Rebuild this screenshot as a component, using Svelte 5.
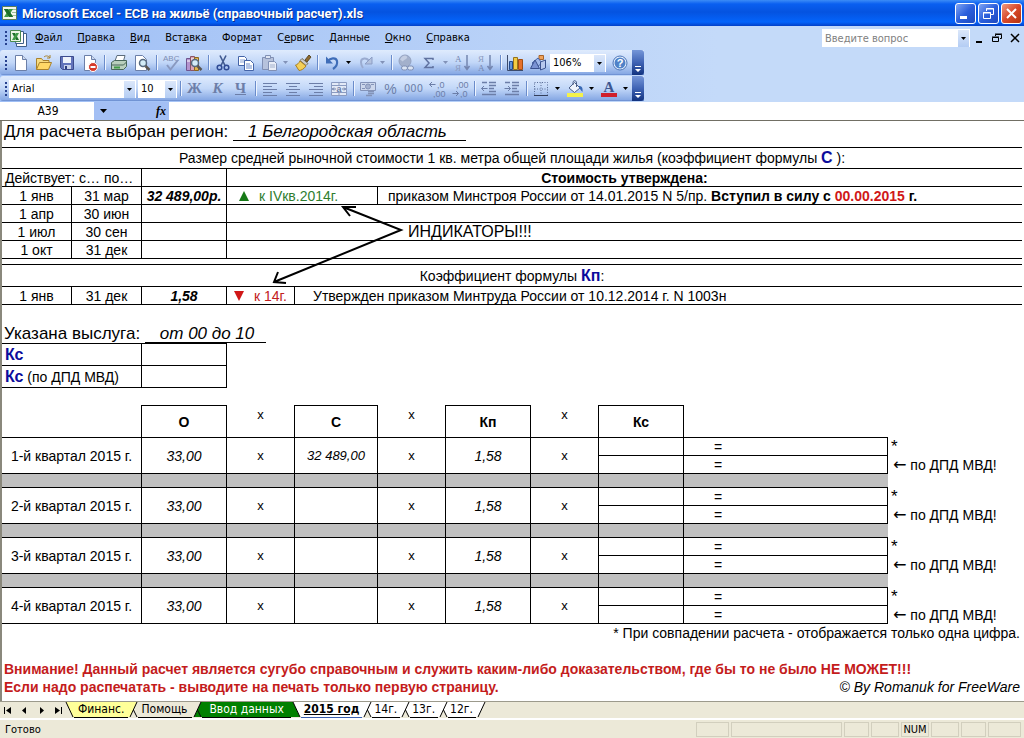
<script>
    const menus = [
        { before: '', key: 'Ф', after: 'айл' },
        { before: '', key: 'П', after: 'равка' },
        { before: '', key: 'В', after: 'ид' },
        { before: 'Вст', key: 'а', after: 'вка' },
        { before: 'Фор', key: 'м', after: 'ат' },
        { before: 'С', key: 'е', after: 'рвис' },
        { before: '', key: 'Д', after: 'анные' },
        { before: '', key: 'О', after: 'кно' },
        { before: '', key: 'С', after: 'правка' }
    ];

    const excelIcon = '<path d="M1.500 2.500h14v13h-14z" fill="#f4f8ee" stroke="#5c7f5a"/><path d="M11 5.500h4M11 8.500h4M11 11.500h4" stroke="#9dbf9a"/><path d="M3 5h4l5 8H8z" fill="#1f7a2c"/><path d="M12 5H8l-5 8h4z" fill="#3f9a45"/><path d="M3 5h4l5 8H8z" fill="#1d6f2a"/>';
    const bookIcon = '<path d="M11.500 4.500h6v13h-10v-3" fill="#fff" stroke="#3f5f8a"/><path d="M8.500 2.500h6v12h-8z" fill="#fff" stroke="#3f5f8a"/><path d="M1.500 1.500h10v11h-10z" fill="#eaf5e4" stroke="#4b8a50"/><path d="M3 4h3l4 7H7z" fill="#1d6f2a"/><path d="M10 4H7l-4 7h3z" fill="#3f9a45"/>';
    const sheetPaper = '<path d="M3.500 1.500h7l4 4v11h-11z" fill="#fff" stroke="#6b7fa8"/><path d="M10.500 1.500v4h4" fill="#cdd9ee" stroke="#6b7fa8"/>';
    const lens = '<circle cx="10" cy="9" r="3.500" fill="#d3ecf7" stroke="#55697f" stroke-width="1.500"/><path d="M12.500 12l4 4" stroke="#5b5650" stroke-width="2.500"/>';

    // Inner markup of the 18x18 toolbar icons
    const icons = {
        new: sheetPaper,
        open: '<path d="M1.500 15.500v-11h5l1.500 2h6v3" fill="#f7dc82" stroke="#a8812c"/><path d="M1.500 15.500l3-7h12l-3 7z" fill="#ffd867" stroke="#a8812c"/><path d="M9 3c2-2 5-1 6 1m0-3v3h-3" fill="none" stroke="#a8812c"/>',
        save: '<path d="M2.500 2.500h13v13h-11l-2-2z" fill="#6273ba" stroke="#3c4a8c"/><path d="M5 3h8v6H5z" fill="#eef2fb"/><path d="M6 11h7v4H6z" fill="#c9d2ea"/><path d="M7 12h2v3H7z" fill="#2c3c80"/>',
        permission: sheetPaper + '<circle cx="12" cy="13" r="4.500" fill="#d5392b" stroke="#fff"/><path d="M9.500 13h5" stroke="#fff" stroke-width="2"/>',
        print: '<path d="M5 7l2-5.500h8L13.500 7z" fill="#fff" stroke="#5c6c7c"/><path d="M1.500 8.500l3-2h12v6l-3 3h-12z" fill="#b9cfbd" stroke="#48665a"/><path d="M2 11h11.500l3-3" fill="none" stroke="#48665a"/><path d="M4 13.500h6" stroke="#3f9a45" stroke-width="2"/>',
        preview: '<path d="M2.500 1.500h7l4 4v11h-11z" fill="#fff" stroke="#6b7fa8"/>' + lens,
        spelling: '<text x="1" y="7" font-size="8" font-family="Liberation Sans" fill="#7f8fb4">ABC</text><path d="M5 11l3.500 4.500L16 6" fill="none" stroke="#8999c0" stroke-width="2"/>',
        research: '<path d="M1.500 4.500h4v12h-4z" fill="#b494cf" stroke="#6f5590"/><path d="M5.500 2.500h4v14h-4z" fill="#d9a5b8" stroke="#8a5565"/><path d="M9.500 3.500h4v13h-4z" fill="#e1b54b" stroke="#8a6521"/><path d="M2 7h3M6 5h3M10 6h3" stroke="#fff"/>' + lens,
        cut: '<path d="M6 1.500l5 10M12 1.500l-5 10" stroke="#40598f" stroke-width="1.600"/><circle cx="5.500" cy="13.500" r="2.300" fill="none" stroke="#2e4a94" stroke-width="1.500"/><circle cx="12.500" cy="13.500" r="2.300" fill="none" stroke="#2e4a94" stroke-width="1.500"/>',
        copy: '<path d="M1.500 2.500h6l2 2v7h-8z" fill="#fff" stroke="#4464a8"/><path d="M3 6h5M3 8h5" stroke="#8ba3d3"/><path d="M7.500 6.500h6l3 3v7h-9z" fill="#fff" stroke="#4464a8"/><path d="M9 10h4M9 12h6M9 14h6" stroke="#6d8ccb"/>',
        paste: '<path d="M2.500 3.500h11v12h-11z" fill="#b6c2dc" stroke="#8190b4"/><path d="M5.500 1.500h5v3h-5z" fill="#dde5f3" stroke="#8190b4"/><path d="M8.500 7.500h6l2 2v7h-8z" fill="#e9eef8" stroke="#8190b4"/><path d="M10 11h5M10 13h5" stroke="#a2b0cc"/>',
        brush: '<path d="M11 6l4-5 2 2-4 5z" fill="#8e6a2f" stroke="#5d4a24"/><path d="M8 4.500l6 5-2 2-6-5z" fill="#ccc" stroke="#77705c"/><path d="M6 7l6 5c-2 3-5 4.500-7 4.500L1.500 11C3 11 5 9 6 7z" fill="#f4cf57" stroke="#a97f22"/>',
        undo: '<path d="M5 7c2-3 8-4 9 0 .6 3-1 6-4 8" fill="none" stroke="#3f6db8" stroke-width="2.200"/><path d="M3 2.500v7h7z" fill="#3f6db8"/>',
        redo: '<path d="M12 7C10 3.500 4 3.500 4 8c0 2 .5 4 2 6" fill="none" stroke="#9aabd0" stroke-width="2"/><path d="M15 3v7H8z" fill="#b4c2de" stroke="#8c9dc4"/>',
        link: '<circle cx="8" cy="7" r="6" fill="#a3b0cb" stroke="#94a2c1"/><path d="M4 6c1-3 4-4 5-3s-3 2-4 4" fill="none" stroke="#c3cde2" stroke-width="2"/><rect x="4.500" y="12" width="6" height="4" rx="2" fill="#dbe4f3" stroke="#7f8fb4"/><rect x="10.500" y="12" width="6" height="4" rx="2" fill="#dbe4f3" stroke="#7f8fb4"/>',
        sum: '<path d="M13 6V4.500H5L9 9l-4 4.500h8V12" fill="none" stroke="#6072a0" stroke-width="1.500"/>',
        sortUp: '<text x="1" y="8" font-size="9" font-family="Liberation Serif" fill="#7486b0">А</text><text x="1" y="17" font-size="9" font-family="Liberation Serif" fill="#8c9cc0">Я</text><path d="M13 1v14M10.500 12l2.500 3.500 2.500-3.500" fill="none" stroke="#7486b0" stroke-width="1.500"/>',
        sortDown: '<text x="1" y="8" font-size="9" font-family="Liberation Serif" fill="#8c9cc0">Я</text><text x="1" y="17" font-size="9" font-family="Liberation Serif" fill="#7486b0">А</text><path d="M13 1v14M10.500 12l2.500 3.500 2.500-3.500" fill="none" stroke="#7486b0" stroke-width="1.500"/>',
        chart: '<path d="M1.500 1v15.500H17" fill="none" stroke="#3c4b6b"/><path d="M3.500 7.500h3v8h-3z" fill="#5f92d8" stroke="#244b8d"/><path d="M7.500 3.500h4v12h-4z" fill="#f3cb43" stroke="#95731c"/><path d="M12.500 5.500h4v10h-4z" fill="#e5702a" stroke="#a24d11"/>',
        drawing: '<path d="M10 1.500h4.500v4H10z" fill="#f0a35b" stroke="#a7642a"/><path d="M3 9l6-5 4 5-5 4z" fill="#9fb8ea" stroke="#4863a4"/><path d="M1.500 14.500L6 6l4.500 8.500z" fill="#7a93d4" stroke="#39518f"/><path d="M11.500 8l5-2v8l-5 2z" fill="#b7c8ee" stroke="#39518f"/>',
        help: '<circle cx="9" cy="9" r="7" fill="#e8f1fd" stroke="#4a74b8"/><circle cx="9" cy="9" r="5.500" fill="#4f82c8"/><text x="9" y="13" text-anchor="middle" font-size="11" font-weight="bold" font-family="Liberation Sans" fill="#fff">?</text>',
        alignLeft: '<path d="M2 3.500h14M2 6.500h9M2 9.500h14M2 12.500h9M2 15.500h14" stroke="#6c7ea8"/>',
        alignCenter: '<path d="M2 3.500h14M5 6.500h8M2 9.500h14M5 12.500h8M2 15.500h14" stroke="#6c7ea8"/>',
        alignRight: '<path d="M2 3.500h14M7 6.500h9M2 9.500h14M7 12.500h9M2 15.500h14" stroke="#6c7ea8"/>',
        merge: '<path d="M1.500 2.500h15v13h-15zM1.500 5.500h15M1.500 12.500h15M9 2.500v3M9 12.500v3" fill="#e3eaf7" stroke="#8a9bc1"/><path d="M2 9h4M12 9h4M4 7.500L2.500 9 4 10.500M14 7.500L15.500 9 14 10.500" fill="none" stroke="#6c7ea8"/><text x="9" y="12" text-anchor="middle" font-size="9" font-weight="bold" font-family="Liberation Sans" fill="#6c7ea8">a</text>',
        currency: '<path d="M1.500 2.500h15v8h-15z" fill="#ccd7ec" stroke="#8393b8"/><circle cx="9" cy="6.500" r="2.500" fill="#a4b2d0" stroke="#8393b8"/><path d="M3 4.500h3M12 4.500h3M3 8.500h3" stroke="#8393b8"/><path d="M9 11.500h6M9 13.500h6M7 15.500h6" stroke="#8393b8" stroke-width="1.500"/>',
        moreDigits: '<text x="9" y="8" font-size="9" font-family="Liberation Sans" fill="#6c7ea8">,0</text><text x="5" y="17" font-size="9" font-family="Liberation Sans" fill="#6c7ea8">,00</text><path d="M7.500 4.500h-6M4 2L1.500 4.500 4 7" fill="none" stroke="#6c7ea8"/>',
        fewerDigits: '<text x="5" y="8" font-size="9" font-family="Liberation Sans" fill="#6c7ea8">,00</text><text x="9" y="17" font-size="9" font-family="Liberation Sans" fill="#6c7ea8">,0</text><path d="M1.500 13.500h6M5 11l2.500 2.500L5 16" fill="none" stroke="#6c7ea8"/>',
        outdent: '<path d="M2 2.500h5M9 2.500h7M9 5.500h7M9 8.500h5M9 11.500h7M2 14.500h14" stroke="#6c7ea8" stroke-width="1.300"/><path d="M7.500 8.500h-6M4 6L1.500 8.500 4 11" fill="none" stroke="#6c7ea8"/>',
        indent: '<path d="M2 2.500h5M9 2.500h7M9 5.500h7M9 8.500h5M9 11.500h7M2 14.500h14" stroke="#6c7ea8" stroke-width="1.300"/><path d="M1.500 8.500h6M5 6l2.500 2.500L5 11" fill="none" stroke="#6c7ea8"/>',
        borders: '<path d="M2.500 2.500h13v13h-13zM9 2.500v13M2.500 9h13" fill="none" stroke="#5a6d96" stroke-dasharray="1 1.500"/><path d="M2 15.500h14" stroke="#333f5c"/>',
        fill: '<path d="M3 8l5.500-5.500L14 8l-5.500 4.500z" fill="#eef3fb" stroke="#4c5f87"/><path d="M7 5V2.500C7 0 10.500 0 10.500 3v4" fill="none" stroke="#4c5f87"/><path d="M13 6c3 0 4 2 3.500 6-1.500-1-2-3-3.500-4z" fill="#3868b4"/><path d="M1 13h16v4H1z" fill="#f4f14a"/>',
        fontColor: '<text x="9" y="12" text-anchor="middle" font-size="15" font-weight="bold" font-family="Liberation Serif" fill="#3e5791">A</text><path d="M1 13h16v4H1z" fill="#d01f2c"/>'
    };

    const standardBar = [
        { icon: 'new', label: 'Создать' },
        { icon: 'open', label: 'Открыть' },
        { icon: 'save', label: 'Сохранить' },
        { icon: 'permission', label: 'Разрешения' },
        { sep: true },
        { icon: 'print', label: 'Печать' },
        { icon: 'preview', label: 'Предварительный просмотр' },
        { sep: true },
        { icon: 'spelling', label: 'Орфография' },
        { icon: 'research', label: 'Справочные материалы' },
        { sep: true },
        { icon: 'cut', label: 'Вырезать' },
        { icon: 'copy', label: 'Копировать' },
        { icon: 'paste', label: 'Вставить', more: 'off' },
        { icon: 'brush', label: 'Формат по образцу' },
        { sep: true },
        { icon: 'undo', label: 'Отменить', more: 'on' },
        { icon: 'redo', label: 'Вернуть', more: 'off' },
        { sep: true },
        { icon: 'link', label: 'Гиперссылка' },
        { icon: 'sum', label: 'Автосумма', more: 'off' },
        { icon: 'sortUp', label: 'Сортировка по возрастанию' },
        { icon: 'sortDown', label: 'Сортировка по убыванию' },
        { sep: true },
        { icon: 'chart', label: 'Мастер диаграмм' },
        { icon: 'drawing', label: 'Рисование' }
    ];

    const formatBar = [
        { sep: true },
        { text: 'Ж', style: 'bold', label: 'Полужирный' },
        { text: 'К', style: 'bold italic', label: 'Курсив' },
        { text: 'Ч', style: 'bold underline', label: 'Подчеркнутый' },
        { sep: true },
        { icon: 'alignLeft', label: 'По левому краю' },
        { icon: 'alignCenter', label: 'По центру' },
        { icon: 'alignRight', label: 'По правому краю' },
        { icon: 'merge', label: 'Объединить и поместить в центре' },
        { sep: true },
        { icon: 'currency', label: 'Денежный формат' },
        { text: '%', style: 'percent', label: 'Процентный формат' },
        { text: '000', style: 'plain', label: 'Формат с разделителями' },
        { icon: 'moreDigits', label: 'Увеличить разрядность' },
        { icon: 'fewerDigits', label: 'Уменьшить разрядность' },
        { sep: true },
        { icon: 'outdent', label: 'Уменьшить отступ' },
        { icon: 'indent', label: 'Увеличить отступ' },
        { sep: true },
        { icon: 'borders', label: 'Границы', more: 'on' },
        { icon: 'fill', label: 'Цвет заливки', more: 'on' },
        { icon: 'fontColor', label: 'Цвет шрифта', more: 'on' }
    ];

    const emptyPeriods = [
        { from: '1 апр', to: '30 июн', note: '' },
        { from: '1 июл', to: '30 сен', note: 'ИНДИКАТОРЫ!!!' },
        { from: '1 окт', to: '31 дек', note: '' }
    ];

    const quarters = [
        { name: '1-й квартал 2015 г.', area: '33,00', price: '32 489,00', kp: '1,58' },
        { name: '2-й квартал 2015 г.', area: '33,00', price: '', kp: '1,58' },
        { name: '3-й квартал 2015 г.', area: '33,00', price: '', kp: '1,58' },
        { name: '4-й квартал 2015 г.', area: '33,00', price: '', kp: '1,58' }
    ];

    const grey = '#ece9d8';
    const tabs = [
        { name: 'Финанс.', color: '#ffff99', kind: 'yellow' },
        { name: 'Помощь', color: grey, kind: 'grey' },
        { name: 'Ввод данных', color: '#008000', kind: 'green' },
        { name: '2015 год', color: '#ffffff', kind: 'active' },
        { name: '14г.', color: '#ffffff', kind: 'white' },
        { name: '13г.', color: '#ffffff', kind: 'white' },
        { name: '12г.', color: '#ffffff', kind: 'white' }
    ];

    const navArrows = [
        { label: 'Первый лист', d: 'M2 2h1v7H2zM9 2v7L4 5.500z' },
        { label: 'Предыдущий лист', d: 'M7 2v7L3 5.500z' },
        { label: 'Следующий лист', d: 'M4 2v7l4-3.500z' },
        { label: 'Последний лист', d: 'M2 2v7l5-3.500zM8 2h1v7H8z' }
    ];
</script>

{#snippet tools(items)}
    {#each items as item}
        {#if item.sep}
            <span class="sep"></span>
        {:else}
            <button class="tool" aria-label={item.label}>
                {#if item.icon}
                    <svg width="18" height="18" viewBox="0 0 18 18">{@html icons[item.icon]}</svg>
                {:else}
                    <span class="glyph {item.style}">{item.text}</span>
                {/if}
            </button>
            {#if item.more}
                <button class="more {item.more}" aria-label="{item.label}: другие варианты">
                    <svg width="5" height="3"><path d="M0 0h5L2.500 3z" fill="currentColor" /></svg>
                </button>
            {/if}
        {/if}
    {/each}
{/snippet}

{#snippet combo(label, value, kind)}
    <span class="combo {kind}">
        <select aria-label={label}>
            <option>{value}</option>
        </select>
        <svg class="drop" width="11" height="17"><path d="M3 7h5L5.500 10z" /></svg>
    </span>
{/snippet}

{#snippet cap()}
    <button class="cap" aria-label="Параметры панелей инструментов">
        <svg width="8" height="8"><path d="M1 1h6v1H1zM1 4h6L4 7z" fill="#fff" /></svg>
    </button>
{/snippet}

<main>
    <header class="titlebar">
        <svg width="18" height="18" viewBox="0 0 18 18">{@html excelIcon}</svg>
        <h1>Microsoft Excel - ЕСВ на жильё (справочный расчет).xls</h1>
        <div class="window-buttons">
            <button aria-label="Свернуть"><svg width="17" height="17"><path d="M3 11h7v3H3z" fill="#fff" /></svg></button>
            <button aria-label="Восстановить">
                <svg width="17" height="17" fill="none" stroke="#fff"><path d="M6.500 6V3.500h7v6H11M6 4h8M3.500 7.500h7v6h-7zM3 8h8" /></svg>
            </button>
            <button class="close" aria-label="Закрыть">
                <svg width="17" height="17"><path d="M4 4l9 9M13 4l-9 9" stroke="#fff" stroke-width="2" /></svg>
            </button>
        </div>
    </header>

    <nav class="menubar">
        <span class="grip"></span>
        <svg width="19" height="19" viewBox="0 0 19 19">{@html bookIcon}</svg>
        <div class="menus">
            {#each menus as menu}
                <button>{menu.before}<u>{menu.key}</u>{menu.after}</button>
            {/each}
        </div>
        <span class="ask">
            <input type="text" placeholder="Введите вопрос" aria-label="Введите вопрос" />
            <svg class="drop" width="11" height="17"><path d="M3 7h5L5.500 10z" /></svg>
        </span>
        <div class="book-buttons">
            <button aria-label="Свернуть книгу"><svg width="12" height="12"><path d="M3 9h6v2H3z" /></svg></button>
            <button aria-label="Восстановить книгу">
                <svg width="12" height="12" fill="none" stroke="#000"><path d="M4.500 4V2.500h6v4H9M4 2h7M1.500 5.500h6v4h-6zM1 5h7" /></svg>
            </button>
            <button aria-label="Закрыть книгу"><svg width="12" height="12"><path d="M2 2l8 8M10 2l-8 8" stroke="#000" stroke-width="1.500" /></svg></button>
        </div>
    </nav>

    <div class="toolbars">
        <div class="toolbar">
            <span class="grip"></span>
            {@render tools(standardBar)}
            {@render combo('Масштаб', '106%', 'zoom')}
            {@render tools([{ icon: 'help', label: 'Справка' }])}
            {@render cap()}
        </div>
        <div class="toolbar">
            <span class="grip"></span>
            {@render combo('Шрифт', 'Arial', 'font')}
            {@render combo('Размер', '10', 'size')}
            {@render tools(formatBar)}
            {@render cap()}
        </div>
    </div>

    <div class="formula-bar">
        <input class="name-box" type="text" value="A39" aria-label="Имя" />
        <div class="fx">
            <button aria-label="Список имен"><svg width="7" height="4"><path d="M0 0h7L3.500 4z" /></svg></button>
            <button class="insert" aria-label="Вставка функции">fx</button>
        </div>
        <input class="formula" type="text" aria-label="Строка формул" />
    </div>

    <section class="sheet">
        <p class="region">Для расчета выбран регион: <em>1 Белгородская область</em></p>

        <table class="rates">
            <colgroup>
                <col class="day" /><col class="day" /><col class="val" /><col class="op" /><col class="price" /><col />
            </colgroup>
            <tbody>
                <tr class="head">
                    <td colspan="6">Размер средней рыночной стоимости 1 кв. метра общей площади жилья (коэффициент формулы <b class="blue">С</b> ):</td>
                </tr>
                <tr>
                    <td class="line left" colspan="2">Действует: с… по…</td>
                    <td class="line"></td>
                    <td colspan="3"><b>Стоимость утверждена:</b></td>
                </tr>
                <tr>
                    <td class="line">1 янв</td>
                    <td class="line">31 мар</td>
                    <td class="line sum">32 489,00р.</td>
                    <td class="line mark up" colspan="2"><svg width="10" height="10"><path d="M5 0l5 10H0z" fill="#177a17" /></svg>к IVкв.2014г.</td>
                    <td class="order">приказом Минстроя России от 14.01.2015 N 5/пр. <b>Вступил в силу с <span class="red">00.00.2015</span> г.</b></td>
                </tr>
                {#each emptyPeriods as period}
                    <tr>
                        <td class="line">{period.from}</td>
                        <td class="line">{period.to}</td>
                        <td class="line"></td>
                        <td colspan="2"></td>
                        <td class="note">{period.note}</td>
                    </tr>
                {/each}
                <tr class="gap"><td colspan="6"></td></tr>
                <tr class="kp">
                    <td colspan="6">Коэффициент формулы <b class="blue">Кп</b>:</td>
                </tr>
                <tr>
                    <td class="line">1 янв</td>
                    <td class="line">31 дек</td>
                    <td class="line sum">1,58</td>
                    <td class="line mark down"><svg width="10" height="10"><path d="M0 0h10L5 10z" fill="#d01818" /></svg>к 14г.</td>
                    <td class="order wide" colspan="2">Утвержден приказом Минтруда России от 10.12.2014 г. N 1003н</td>
                </tr>
            </tbody>
        </table>

        <svg class="arrows" width="136" height="86" fill="none" stroke="#000" stroke-width="2">
            <path d="M73 6l58 23L4 81M86 6L73 6l7 9M8 71L4 81l12 1" />
        </svg>

        <p class="service">Указана выслуга: <em>от 00 до 10</em></p>

        <table class="length">
            <tbody>
                <tr><th><b class="blue">Кс</b></th><td></td></tr>
                <tr><th><b class="blue">Кс</b> (по ДПД МВД)</th><td></td></tr>
            </tbody>
        </table>

        <table class="quarters">
            <colgroup>
                <col class="name" /><col class="val" /><col class="op" /><col class="price" /><col class="op" />
                <col class="val" /><col class="op" /><col class="val" /><col class="result" /><col />
            </colgroup>
            <thead>
                <tr>
                    <td class="line"></td>
                    <th>О</th>
                    <td class="line times">х</td>
                    <th>С</th>
                    <td class="line times">х</td>
                    <th>Кп</th>
                    <td class="line times">х</td>
                    <th>Кс</th>
                    <td></td>
                    <td class="side"></td>
                </tr>
            </thead>
            <tbody>
                {#each quarters as quarter, i}
                    {#if i > 0}
                        <tr class="band">
                            <td class="line"></td><td class="line"></td><td class="line"></td>
                            <td class="line"></td><td class="line"></td><td class="line"></td>
                            <td class="line"></td><td class="line"></td><td></td><td class="side"></td>
                        </tr>
                    {/if}
                    <tr>
                        <td class="line" rowspan="2">{quarter.name}</td>
                        <td class="line num" rowspan="2">{quarter.area}</td>
                        <td class="line small" rowspan="2">х</td>
                        <td class="line num small" rowspan="2">{quarter.price}</td>
                        <td class="line small" rowspan="2">х</td>
                        <td class="line num" rowspan="2">{quarter.kp}</td>
                        <td class="line small" rowspan="2">х</td>
                        <td class="line"></td>
                        <td class="line equals">=</td>
                        <td class="side star">*</td>
                    </tr>
                    <tr>
                        <td class="line"></td>
                        <td class="line equals">=</td>
                        <td class="side"><span class="back">←</span> по ДПД МВД!</td>
                    </tr>
                {/each}
            </tbody>
        </table>

        <p class="footnote">* При совпадении расчета - отображается только одна цифра.</p>

        <div class="warning">
            <p>Внимание! Данный расчет является сугубо справочным и служить каким-либо доказательством, где бы то не было НЕ МОЖЕТ!!!</p>
            <div>
                <p>Если надо распечатать - выводите на печать только первую страницу.</p>
                <i>© By Romanuk for FreeWare</i>
            </div>
        </div>
    </section>

    <nav class="tabs">
        <div class="arrows-nav">
            {#each navArrows as arrow}
                <button aria-label={arrow.label}><svg width="11" height="11"><path d={arrow.d} /></svg></button>
            {/each}
        </div>
        {#each tabs as tab, i}
            {@const prev = i ? tabs[i - 1].color : grey}
            <svg class="edge" width="10" height="16">
                {#if i === 0 || tab.kind === 'active'}
                    <path d="M0 0h2l7 15H0z" fill={prev} />
                    <path d="M2 0h8v15H9z" fill={tab.color} />
                    <path d="M2 0l7 15" stroke="#000" />
                {:else}
                    <path d="M0 0h9L2 15H0z" fill={prev} />
                    <path d="M9 0h1v15H9L5.500 8z" fill={tab.color} />
                    <path d="M5.500 8L2 15h7z" fill={tab.kind === 'green' ? tab.color : grey} />
                    <path d="M9 0L2 15M5.500 8L9 15" stroke="#000" />
                {/if}
            </svg>
            <button class="tab {tab.kind}">{tab.name}</button>
        {/each}
        <svg class="edge" width="10" height="16">
            <path d="M0 0h9L2 15H0z" fill="#fff" />
            <path d="M9 0L2 15" stroke="#000" />
        </svg>
    </nav>

    <footer class="status">
        <span class="ready">Готово</span>
        <span class="pane w33"></span>
        <span class="pane w111"></span>
        <span class="pane w25"></span>
        <span class="pane w28"></span>
        <span class="pane w28">NUM</span>
        <span class="pane w28"></span>
        <span class="pane w25"></span>
        <span class="pane w33"></span>
    </footer>
</main>

<style>
    :global(body) {
        background: #fff;
    }

    main {
        display: flex;
        flex-direction: column;
        min-height: 100vh;
        font-family: "DejaVu Sans Condensed", "DejaVu Sans", sans-serif;
        font-size: 11px;
        color: #000;
    }

    button, input, select {
        margin: 0;
        padding: 0;
        border: 0;
        background: none;
        font: inherit;
        color: inherit;
    }

    svg {
        display: block;
        flex: none;
    }

    p, h1 {
        margin: 0;
    }

    /* Title bar */
    .titlebar {
        display: flex;
        align-items: center;
        gap: 3px;
        height: 26px;
        padding: 0 2px 0 1px;
        background: linear-gradient(#3c8cf6 0, #0a5ff0 4px, #0553e0 12px, #0464fb 22px, #0340c8 26px);
    }

    h1 {
        flex: 1;
        font: bold 13px Roboto, "Open Sans", sans-serif;
        color: #fff;
        text-shadow: 1px 1px #0a2f8c;
    }

    .window-buttons {
        display: flex;
        gap: 2px;
    }

    .window-buttons button {
        display: grid;
        place-items: center;
        width: 21px;
        height: 21px;
        border: 1px solid #fff;
        border-radius: 3px;
        background: linear-gradient(135deg, #7fa5f4, #2b5fdc 50%, #1d49bf);
    }

    .window-buttons .close {
        background: linear-gradient(135deg, #ee9a80, #d8492a 50%, #b4320f);
    }

    /* Menu bar */
    .menubar {
        display: flex;
        align-items: center;
        height: 24px;
        padding: 0 3px 0 5px;
        background: linear-gradient(90deg, #9ebef5, #c4daf9 70%);
    }

    .grip {
        width: 2px;
        height: 14px;
        margin-right: 2px;
        background: repeating-linear-gradient(#27418f 0 2px, transparent 2px 4px);
    }

    .menus {
        display: flex;
        flex: 1;
    }

    .menus button {
        padding: 0 8px 0 7px;
        line-height: 20px;
    }

    .ask {
        position: relative;
        width: 148px;
        height: 18px;
        background: #fff;
    }

    .ask input {
        width: 134px;
        height: 18px;
        padding: 0 3px;
        box-sizing: border-box;
    }

    .ask input::placeholder {
        color: #808080;
        opacity: 1;
    }

    .drop {
        position: absolute;
        top: 1px;
        right: 1px;
        bottom: 0;
        background: linear-gradient(#dbe7fa, #b4cdf4);
        pointer-events: none;
    }

    .book-buttons {
        display: flex;
        gap: 6px;
        margin-left: 3px;
    }

    /* Toolbars */
    .toolbars {
        display: flex;
        flex-direction: column;
        align-items: flex-start;
        gap: 1px;
        padding-bottom: 1px;
        background: linear-gradient(90deg, #9ebef5, #c4daf9 70%);
    }

    .toolbar {
        display: flex;
        align-items: center;
        height: 25px;
        padding-left: 5px;
        border-radius: 3px 0 0 3px;
        background: linear-gradient(#dfebfd, #c2d7f8 50%, #86a8e4 96%, #5c7fc4);
    }

    .tool {
        display: grid;
        place-items: center;
        flex: none;
        width: 23px;
        height: 23px;
    }

    .glyph {
        font: 12px "Liberation Sans", sans-serif;
        color: #6c7ea8;
    }

    .glyph.bold {
        font: bold 15px "Liberation Serif", serif;
    }

    .glyph.italic {
        font-style: italic;
    }

    .glyph.underline {
        text-decoration: underline;
    }

    .glyph.plain {
        font: 11px "DejaVu Sans Condensed", sans-serif;
    }

    .glyph.percent {
        font-size: 14px;
    }

    .more {
        display: grid;
        place-items: center;
        width: 11px;
        height: 23px;
    }

    .more.off {
        color: #8292b8;
    }

    .sep {
        width: 1px;
        height: 15px;
        margin: 0 1px 0 3px;
        border-right: 1px solid #eef4fe;
        background: #6a8ccb;
    }

    .combo {
        position: relative;
        height: 18px;
        background: #fff;
    }

    .combo select {
        width: 100%;
        height: 18px;
        padding: 0 3px;
        appearance: none;
    }

    .combo.font {
        width: 127px;
        margin-right: 2px;
    }

    .combo.size {
        width: 39px;
    }

    .combo.zoom {
        width: 56px;
        margin: 0 2px 0 1px;
    }

    .cap {
        display: flex;
        align-items: flex-end;
        justify-content: center;
        width: 12px;
        height: 25px;
        padding-bottom: 2px;
        margin-left: 1px;
        border-radius: 0 3px 3px 0;
        background: linear-gradient(#7596d8, #3f63b4 50%, #12337f);
    }

    /* Formula bar */
    .formula-bar {
        display: flex;
        height: 18px;
        padding: 0 2px;
        border-bottom: 1px solid #716f64;
        background: #fff;
    }

    .name-box {
        width: 92px;
        font-size: 12px;
        text-align: center;
    }

    .fx {
        display: flex;
        align-items: center;
        justify-content: space-between;
        width: 75px;
        padding: 0 3px 0 6px;
        box-sizing: border-box;
        background: #a3bff4;
    }

    .insert {
        font: italic bold 12px "Liberation Serif", serif;
    }

    .formula {
        flex: 1;
        background: #fff;
    }

    /* Sheet */
    .sheet {
        position: relative;
        flex: 1;
        padding-right: 2px;
        border-left: 2px solid #8a887c;
        background: #fff;
        font-family: "Liberation Sans", Arial, sans-serif;
        font-size: 14px;
        line-height: 16px;
    }

    .region, .service {
        padding-left: 2px;
        font-size: 17px;
        line-height: 18px;
    }

    .region {
        height: 26px;
        padding-top: 2px;
        box-sizing: border-box;
    }

    .region em, .service em {
        display: inline-block;
        border-bottom: 1px solid #000;
        padding: 0 19px 0 15px;
        line-height: 17px;
    }

    .service em {
        padding-right: 12px;
    }

    table {
        border-spacing: 0;
        table-layout: fixed;
        width: 100%;
    }

    td, th {
        padding: 0;
        border-bottom: 1px solid #000;
        text-align: center;
        white-space: nowrap;
        font-weight: normal;
    }

    tr {
        height: 18px;
    }

    .line {
        border-right: 1px solid #000;
    }

    .day {
        width: 70px;
    }

    .val {
        width: 85px;
    }

    .op {
        width: 68px;
    }

    .price {
        width: 83px;
    }

    .name {
        width: 140px;
    }

    .result {
        width: 204px;
    }

    .rates {
        border-top: 1px solid #000;
    }

    .rates .head {
        height: 21px;
    }

    .rates .gap {
        height: 6px;
    }

    .rates .gap td {
        line-height: 5px;
    }

    .rates .kp {
        height: 22px;
    }

    .rates .left {
        padding-left: 3px;
        text-align: left;
    }

    .sum {
        font-weight: bold;
        font-style: italic;
    }

    .mark {
        padding-left: 12px;
        text-align: left;
    }

    .mark svg {
        display: inline-block;
        margin-right: 10px;
    }

    .up {
        color: #2f7d2f;
    }

    .down {
        padding-left: 7px;
        color: #c22020;
    }

    .order {
        padding-left: 10px;
        text-align: left;
    }

    .order.wide {
        padding-left: 18px;
    }

    .note {
        padding-left: 30px;
        text-align: left;
        font-size: 16px;
    }

    .blue {
        font-size: 16px;
        color: #0c0c9c;
    }

    .red {
        color: #d01818;
    }

    .arrows {
        position: absolute;
        top: 80px;
        left: 268px;
    }

    .service {
        padding-top: 20px;
    }

    .length {
        width: 225px;
        border-top: 1px solid #000;
    }

    .length tr {
        height: 22px;
    }

    .length th {
        width: 136px;
        padding-left: 3px;
        border-right: 1px solid #000;
        text-align: left;
    }

    .length td {
        border-right: 1px solid #000;
    }

    .quarters {
        margin-top: 17px;
    }

    .quarters thead tr {
        height: 33px;
    }

    .quarters thead th {
        border-top: 1px solid #000;
        border-right: 1px solid #000;
        font-weight: bold;
    }

    .quarters .times {
        padding-top: 2px;
        vertical-align: top;
        font-size: 13px;
    }

    .quarters .small {
        font-size: 13px;
    }

    .num {
        font-style: italic;
    }

    .quarters .equals {
        padding-left: 30px;
        text-align: left;
    }

    .quarters .side {
        padding-left: 5px;
        border-bottom: 0;
        text-align: left;
    }

    .quarters .star {
        padding-left: 3px;
        font-size: 17px;
    }

    .back {
        font: 16px/12px "DejaVu Sans", sans-serif;
    }

    .band {
        height: 14px;
    }

    .band td {
        background: #c0c0c0;
        line-height: 13px;
    }

    .band .side {
        background: none;
    }

    .footnote {
        padding-right: 2px;
        text-align: right;
        line-height: 18px;
    }

    .warning {
        padding: 18px 2px 5px;
        font-weight: bold;
        line-height: 18px;
        color: #c41c1c;
    }

    .warning div {
        display: flex;
        justify-content: space-between;
    }

    .warning i {
        font-weight: normal;
        color: #000;
    }

    /* Sheet tabs */
    .tabs {
        display: flex;
        height: 16px;
        border-top: 1px solid #9c9a8c;
        border-bottom: 2px solid #fff;
        background: #ece9d8;
        font-size: 12px;
    }

    .arrows-nav {
        display: flex;
        gap: 6px;
        align-items: center;
        width: 64px;
        padding-left: 2px;
        box-sizing: border-box;
    }

    .tab {
        height: 15px;
        padding: 0 3px;
        line-height: 15px;
        border-bottom: 1px solid #000;
        box-sizing: content-box;
    }

    .tab.yellow {
        padding: 0 4px;
        background: #ffff99;
    }

    .tab.grey {
        padding: 0 5px 0 3px;
    }

    .tab.green {
        padding: 0 7px;
        background: #008000;
        color: #fff;
    }

    .tab.active {
        background: #fff;
        border-bottom-color: #3a5fb0;
        font-weight: bold;
        text-decoration: underline;
    }

    .tab.white {
        padding: 0 3px 0 2px;
        background: #fff;
    }

    /* Status bar */
    .status {
        display: flex;
        align-items: center;
        gap: 2px;
        height: 19px;
        padding: 0 3px 0 5px;
        background: #ece9d8;
    }

    .ready {
        flex: 1;
    }

    .pane {
        height: 15px;
        border: 1px solid #d2cfbe;
        box-sizing: border-box;
        line-height: 13px;
        text-align: center;
    }

    .w25 {
        width: 25px;
    }

    .w28 {
        width: 28px;
    }

    .w33 {
        width: 33px;
    }

    .w111 {
        width: 111px;
    }
</style>
